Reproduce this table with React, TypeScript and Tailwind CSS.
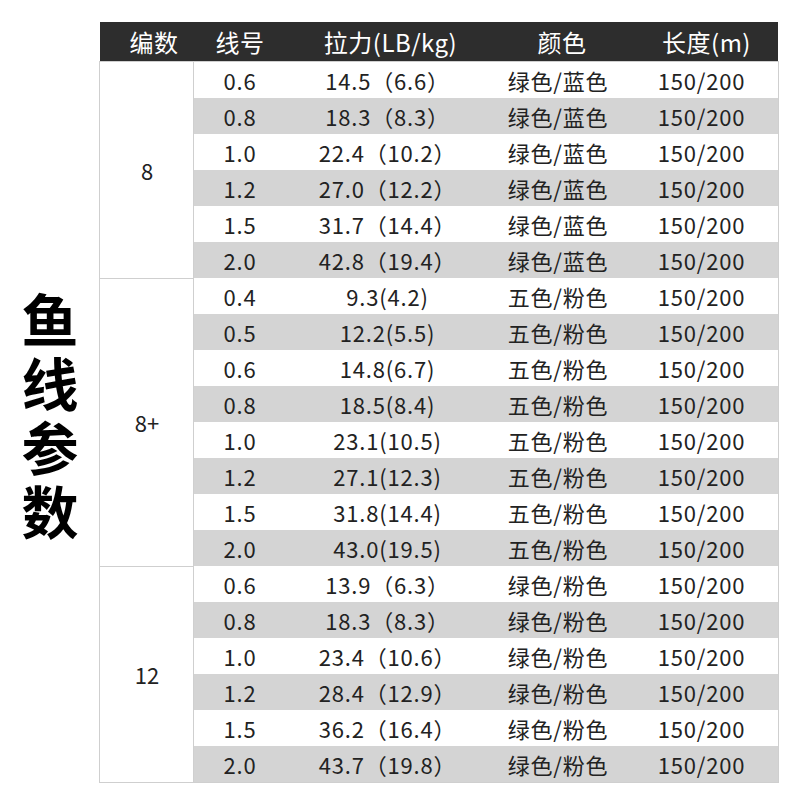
const groups = [
  {
    label: '8',
    rows: [
      ['0.6', '14.5（6.6）', '绿色/蓝色', '150/200'],
      ['0.8', '18.3（8.3）', '绿色/蓝色', '150/200'],
      ['1.0', '22.4（10.2）', '绿色/蓝色', '150/200'],
      ['1.2', '27.0（12.2）', '绿色/蓝色', '150/200'],
      ['1.5', '31.7（14.4）', '绿色/蓝色', '150/200'],
      ['2.0', '42.8（19.4）', '绿色/蓝色', '150/200'],
    ],
  },
  {
    label: '8+',
    rows: [
      ['0.4', '9.3(4.2)', '五色/粉色', '150/200'],
      ['0.5', '12.2(5.5)', '五色/粉色', '150/200'],
      ['0.6', '14.8(6.7)', '五色/粉色', '150/200'],
      ['0.8', '18.5(8.4)', '五色/粉色', '150/200'],
      ['1.0', '23.1(10.5)', '五色/粉色', '150/200'],
      ['1.2', '27.1(12.3)', '五色/粉色', '150/200'],
      ['1.5', '31.8(14.4)', '五色/粉色', '150/200'],
      ['2.0', '43.0(19.5)', '五色/粉色', '150/200'],
    ],
  },
  {
    label: '12',
    rows: [
      ['0.6', '13.9（6.3）', '绿色/粉色', '150/200'],
      ['0.8', '18.3（8.3）', '绿色/粉色', '150/200'],
      ['1.0', '23.4（10.6）', '绿色/粉色', '150/200'],
      ['1.2', '28.4（12.9）', '绿色/粉色', '150/200'],
      ['1.5', '36.2（16.4）', '绿色/粉色', '150/200'],
      ['2.0', '43.7（19.8）', '绿色/粉色', '150/200'],
    ],
  },
];

const font = { fontFamily: '"Noto Sans CJK SC", "Noto Sans", sans-serif' };

function DataRow({ cells, shaded }: { cells: string[]; shaded: boolean }) {
  return (
    <div
      className={`flex h-[36px] shrink-0 items-center text-[22px] tracking-[0.8px] text-[#222] ${shaded ? 'bg-[#d4d4d4]' : 'bg-white'}`}
    >
      <div className="w-[96px] pr-[4px] text-center">{cells[0]}</div>
      <div className="w-[195px] text-center">{cells[1]}</div>
      <div className="w-[150px] pr-[4px] text-center">{cells[2]}</div>
      <div className="flex-1 pr-[10px] text-center">{cells[3]}</div>
    </div>
  );
}

export default function App() {
  return (
    <div className="flex h-[800px] w-[800px] bg-white" style={font}>
      <div className="flex w-[100px] items-center justify-center pt-[26px]">
        <div className="flex flex-col items-center text-[57px] font-bold leading-[64px] text-black">
          <span>鱼</span>
          <span>线</span>
          <span>参</span>
          <span>数</span>
        </div>
      </div>

      <div className="mt-[22px] flex w-[678px] flex-col self-start">
        <div className="flex h-[40px] shrink-0 items-center bg-[#2d2d2d] text-[24px] tracking-[0.5px] text-white">
          <div className="w-[94px] pl-[14px] text-center">编数</div>
          <div className="w-[96px] pr-[4px] text-center">线号</div>
          <div className="w-[195px] pl-[6px] text-center">拉力(LB/kg)</div>
          <div className="w-[150px] pl-[4px] text-center">颜色</div>
          <div className="flex-1 text-center">长度(m)</div>
        </div>

        {/* borders drawn as shadows so the 36px row grid stays exact */}
        <div className="flex flex-col shadow-[0_0_0_1px_#cfcfcf]">
          {groups.map((g, gi) => (
            <div key={g.label} className="flex">
              <div
                className={`flex w-[94px] items-center justify-center text-[22px] text-[#222] ${
                  gi > 0
                    ? 'shadow-[inset_-1px_0_0_#cfcfcf,inset_0_1px_0_#cfcfcf]'
                    : 'shadow-[inset_-1px_0_0_#cfcfcf]'
                }`}
              >
                {g.label}
              </div>
              <div className="flex flex-1 flex-col">
                {g.rows.map((r, i) => (
                  <DataRow key={i} cells={r} shaded={i % 2 === 1} />
                ))}
              </div>
            </div>
          ))}
        </div>
      </div>
    </div>
  );
}
